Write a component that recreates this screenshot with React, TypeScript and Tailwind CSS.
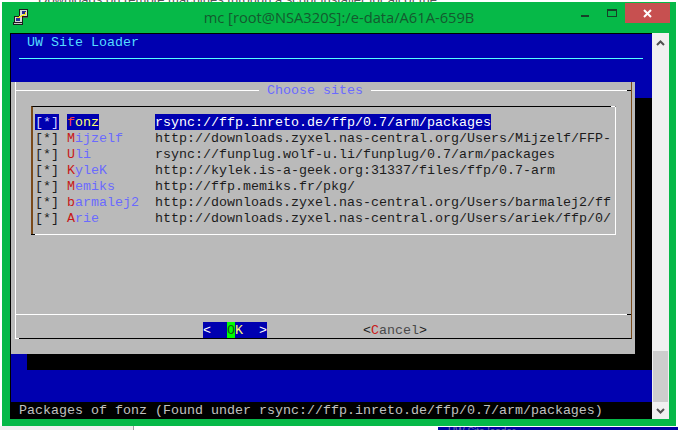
const sites = [
  { name: "fonz", url: "rsync://ffp.inreto.de/ffp/0.7/arm/packages", active: true },
  { name: "Mijzelf", url: "http://downloads.zyxel.nas-central.org/Users/Mijzelf/FFP-" },
  { name: "Uli", url: "rsync://funplug.wolf-u.li/funplug/0.7/arm/packages" },
  { name: "KyleK", url: "http://kylek.is-a-geek.org:31337/files/ffp/0.7-arm" },
  { name: "Memiks", url: "http://ffp.memiks.fr/pkg/" },
  { name: "barmalej2", url: "http://downloads.zyxel.nas-central.org/Users/barmalej2/ff" },
  { name: "Arie", url: "http://downloads.zyxel.nas-central.org/Users/ariek/ffp/0/" },
];

function PuttyIcon() {
  return (
    <svg width="16" height="17" viewBox="0 0 16 17" shapeRendering="crispEdges">
      <rect x="6" y="0" width="9" height="8" fill="#1c1c1c" />
      <rect x="7" y="1" width="7" height="6" fill="#d8d8d8" />
      <rect x="9" y="2" width="4" height="3" fill="#2a2a90" />
      <rect x="7" y="8" width="8" height="1" fill="#555555" />
      <rect x="1" y="7" width="9" height="7" fill="#1c1c1c" />
      <rect x="2" y="8" width="7" height="5" fill="#d8d8d8" />
      <rect x="3" y="9" width="4" height="3" fill="#2a2a90" />
      <rect x="0" y="13" width="10" height="3" fill="#1c1c1c" />
      <rect x="1" y="14" width="8" height="1" fill="#c4c4c4" />
      <path d="M3 8h3V7h2V6h2V5h2V3h1v3h-2v1H9v1H7v1H4z" fill="#f6e81c" />
    </svg>
  );
}

function Chevron({ down }: { down?: boolean }) {
  return (
    <svg width="9" height="6" viewBox="0 0 9 6" className={down ? "rotate-180" : ""}>
      <path d="M1 5l3.5-3.5L8 5" fill="none" stroke="#505050" strokeWidth="2" />
    </svg>
  );
}

function SiteRow({ name, url, active }: { name: string; url: string; active?: boolean }) {
  return (
    <div className="flex h-4 pl-[2px]">
      <span className={active ? "w-6 bg-[#0000b0] text-[#d0d0ff]" : "w-6 text-[#1c1c1c]"}>[*]</span>
      <div className="ml-2 w-[88px]">
        <span className={active ? "inline-block h-4 bg-[#0000b0] align-top text-[#ffff70]" : "inline-block h-4 align-top text-[#6a6aff]"}>
          <span className={active ? "text-[#ff4040]" : "text-[#c81818]"}>{name[0]}</span>
          {name.slice(1)}
        </span>
      </div>
      <div className="h-4 w-[456px] overflow-hidden whitespace-pre">
        <span className={active ? "inline-block h-4 bg-[#0000b0] align-top text-white" : "inline-block h-4 align-top text-[#1c1c1c]"}>{url}</span>
      </div>
    </div>
  );
}

export default function App() {
  return (
    <div className="relative h-[430px] w-[678px] overflow-hidden bg-white pl-[2px] pt-[2px]">
      {/* whatever sits behind the window */}
      <div className="absolute left-[38px] top-[-10px] whitespace-nowrap font-['Liberation_Sans',sans-serif] text-[13px] text-[#555555]">
        Downloads on remote machines through a script installer for all of the
      </div>
      <div className="absolute bottom-0 left-0 h-1 w-[134px] border-r border-[#a0a0a0] bg-[#f0f0f0]" />
      <div className="absolute bottom-0 right-0 h-[3px] w-[240px] overflow-hidden bg-[#0000a0] pl-[10px] font-['Liberation_Sans',sans-serif] text-[10px] leading-[10px] text-[#7070a8]">
        UW Site loader
      </div>

      <div className="relative flex h-[424px] w-[674px] flex-col bg-[#06b948]">
        <div className="grid h-[31px] grid-cols-[1fr_auto_1fr]">
          <div className="pl-[11px] pt-[7px]">
            <PuttyIcon />
          </div>
          <div className="pt-[5px] font-['Open_Sans',sans-serif] text-[14.7px] leading-5 text-[#14592f]">
            mc [root@NSA320S]:/e-data/A61A-659B
          </div>
          <div className="flex items-start justify-end pr-[6px]">
            <div className="ml-auto mt-[13px] h-[2px] w-2 bg-[#173f28]" />
            <div className="ml-[18px] mt-[7px] h-2 w-[10px] border border-t-2 border-[#173f28]" />
            <div className="ml-2 mt-px flex h-5 w-[45px] items-center justify-center bg-[#c75050]">
              <svg width="9" height="9" viewBox="0 0 9 9">
                <path d="M1 1l7 7M8 1L1 8" stroke="white" strokeWidth="2" />
              </svg>
            </div>
          </div>
        </div>

        <div className="ml-2 flex h-[386px]">
          <div className="flex w-[642px] flex-col overflow-hidden border-l border-t border-black bg-[#0000b0] font-['Liberation_Mono','Courier_New',monospace] text-[13.33px] leading-[18px]">
            <div className="h-4 pl-4 text-[#55ddff]">UW Site Loader</div>
            <div className="flex h-4 items-center pl-2">
              <div className="h-px w-[624px] bg-[#55ffff]" />
            </div>
            <div className="h-4" />

            <div className="h-[272px] w-[624px] shrink-0 bg-[#bababa] pl-1 pt-2 shadow-[16px_16px_0_0_#000,17px_16px_0_0_#000]">
              <div className="relative h-[257px] w-[617px] border-b border-l border-r border-b-black border-l-white border-r-[#7a4a1a]">
                <div className="absolute -bottom-px -left-px h-px w-1 bg-white" />
                <div className="-mt-2 flex h-4 items-center">
                  <div className="h-px w-[243px] bg-white" />
                  <span className="px-2 pt-[2px] text-[#6a6aff]">Choose sites</span>
                  <div className="h-px w-[256px] bg-white" />
                  <div className="h-px w-1 bg-black" />
                </div>

                <div className="relative ml-[15px] mt-2 h-[129px] w-[585px] border-b border-l-2 border-r border-t border-b-white border-l-[#7a4a1a] border-r-white border-t-black pt-[7px]">
                  <div className="absolute -top-px right-0 h-px w-1 bg-white" />
                  <div className="absolute -bottom-px -left-[2px] h-px w-1 bg-black" />
                  {sites.map((site) => (
                    <SiteRow key={site.name} {...site} />
                  ))}
                </div>

                <div className="mt-[79px] flex items-center">
                  <div className="h-px w-[611px] bg-white" />
                  <div className="h-px w-1 bg-black" />
                </div>

                <div className="ml-[187px] mt-[7px] flex h-4 gap-24 whitespace-pre">
                  <div className="h-4 w-16 bg-[#0000b0] text-white">
                    {"<  "}
                    <span className="inline-block h-4 bg-[#00ff00] align-top text-[#145a14]">O</span>
                    <span className="text-[#ffff70]">K</span>
                    {"  >"}
                  </div>
                  <div className="text-[#1c1c1c]">
                    {"<"}
                    <span className="text-[#c81818]">C</span>
                    <span className="text-[#4a4a4a]">ancel</span>
                    {">"}
                  </div>
                </div>
              </div>
            </div>

            <div className="flex-1" />
            <div className="h-[17px] shrink-0 whitespace-pre bg-black pl-2 text-[#c0c0c0]">
              Packages of fonz (Found under rsync://ffp.inreto.de/ffp/0.7/arm/packages)
            </div>
          </div>

          <div className="flex w-[17px] flex-col items-center border-t border-[#f0f0f0] bg-[#f0f0f0]">
            <div className="flex h-[17px] shrink-0 items-center justify-center">
              <Chevron />
            </div>
            <div className="flex-1" />
            <div className="h-[51px] w-[15px] shrink-0 bg-[#cdcdcd]" />
            <div className="flex h-[17px] shrink-0 items-center justify-center">
              <Chevron down />
            </div>
          </div>
        </div>
      </div>
    </div>
  );
}
